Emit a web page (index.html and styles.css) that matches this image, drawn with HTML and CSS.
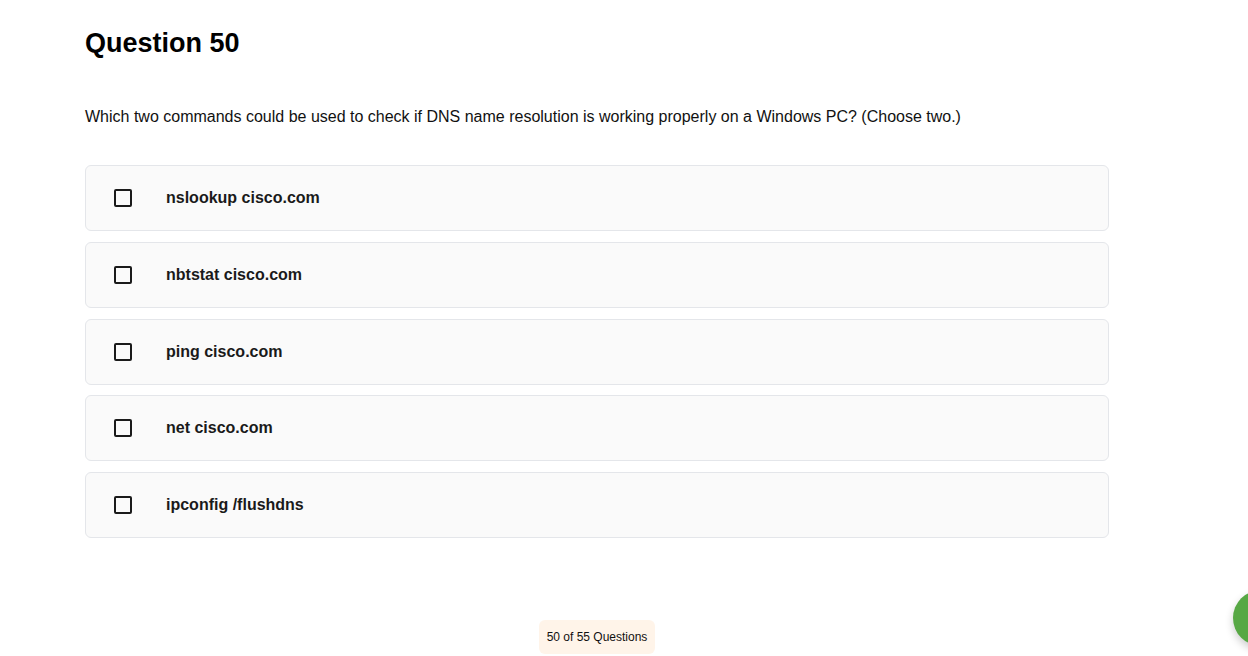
FILE: index.html
```html
<!DOCTYPE html>
<html lang="en">
<head>
<meta charset="utf-8">
<title>Question 50</title>
<link rel="stylesheet" href="styles.css">
</head>
<body>
<main class="quiz">
  <h1 class="title">Question 50</h1>
  <p class="prompt">Which two commands could be used to check if DNS name resolution is working properly on a Windows PC? (Choose two.)</p>
  <ul class="options">
    <li class="option"><span class="box"></span><span class="label">nslookup cisco.com</span></li>
    <li class="option"><span class="box"></span><span class="label">nbtstat cisco.com</span></li>
    <li class="option"><span class="box"></span><span class="label">ping cisco.com</span></li>
    <li class="option"><span class="box"></span><span class="label">net cisco.com</span></li>
    <li class="option"><span class="box"></span><span class="label">ipconfig /flushdns</span></li>
  </ul>
  <div class="footer"><span class="counter">50 of 55 Questions</span></div>
</main>
<div class="fab"></div>
</body>
</html>
```

FILE: styles.css
```css
html, body {
  margin: 0;
  padding: 0;
  background: #ffffff;
}
body {
  font-family: "Liberation Sans", Arial, sans-serif;
  color: #111111;
  overflow: hidden;
}
.quiz {
  width: 1024px;
  margin-left: 85px;
  padding-top: 27px;
}
.title {
  margin: 0;
  font-size: 27px;
  line-height: 32px;
  font-weight: 700;
  color: #000;
}
.prompt {
  margin: 46px 0 0;
  font-size: 16px;
  line-height: 24px;
  color: #111;
}
.options {
  list-style: none;
  margin: 36px 0 0;
  padding: 0;
  display: flex;
  flex-direction: column;
  gap: 10.75px;
}
.option {
  box-sizing: border-box;
  height: 66px;
  display: flex;
  align-items: center;
  padding-left: 28px;
  background: #fafafa;
  border: 1px solid #e4e6ea;
  border-radius: 6px;
}
.box {
  box-sizing: border-box;
  width: 18px;
  height: 18px;
  border: 2px solid #1a1a1a;
  border-radius: 2px;
  flex: none;
}
.label {
  margin-left: 34px;
  font-size: 16px;
  font-weight: 700;
  color: #1a1a1a;
}
.footer {
  display: flex;
  justify-content: center;
  margin-top: 82px;
}
.counter {
  display: inline-block;
  padding: 10px 8px 9px;
  font-size: 12px;
  line-height: 15px;
  color: #111;
  background: #fff4e9;
  border-radius: 6px;
}
.fab {
  position: fixed;
  right: -41px;
  bottom: 10px;
  width: 56px;
  height: 56px;
  border-radius: 50%;
  background: #57a844;
  box-shadow: 0 4px 8px rgba(0, 0, 0, 0.2);
}
```
